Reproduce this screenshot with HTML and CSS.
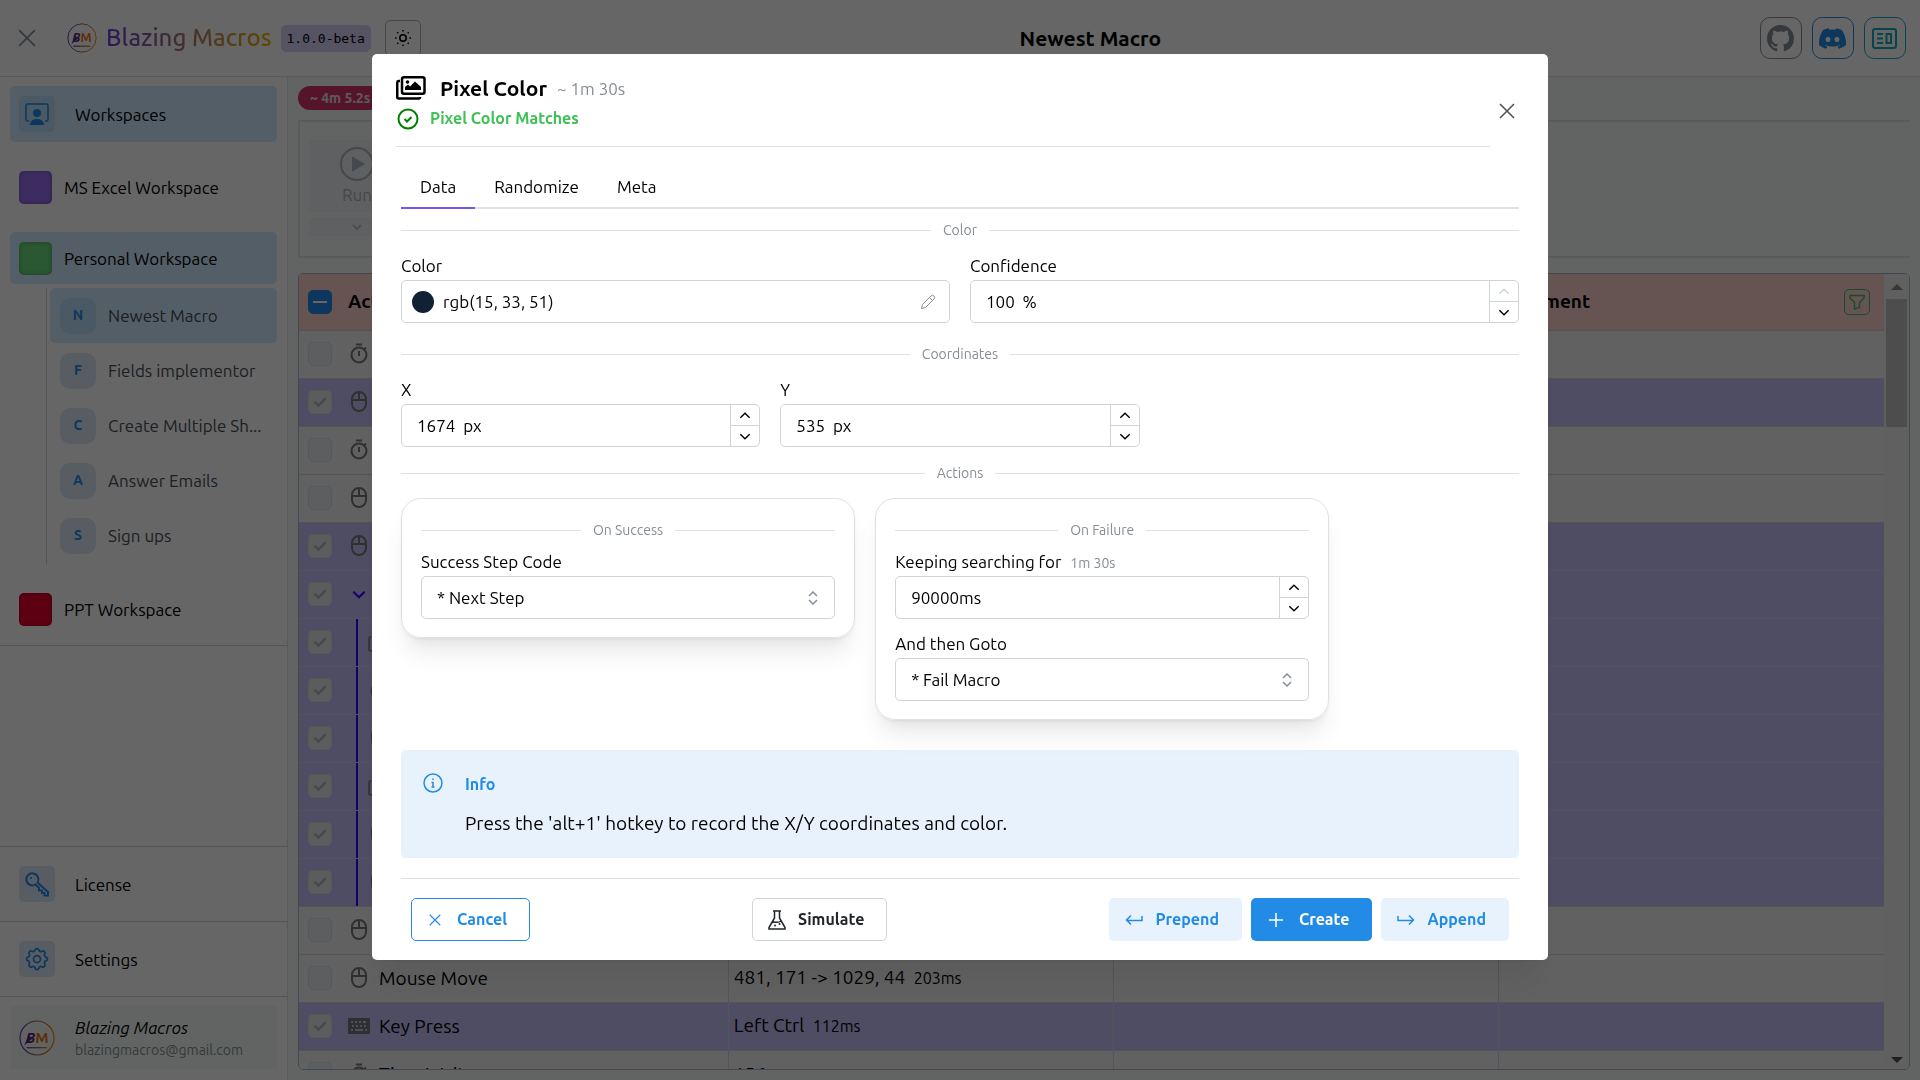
FILE: index.html
```html
<!DOCTYPE html>
<html lang="en">
<head>
    <meta charset="UTF-8" />
    <meta name="viewport" content="width=device-width, initial-scale=1.0" />
    <title>Blazing Macros</title>
    <link rel="stylesheet" href="styles.css">
</head>
<body>
<!-- shared icons -->
<svg class="sprite" width="0" height="0" aria-hidden="true">
    <linearGradient id="brand" x1="0" x2="1"><stop offset="0" stop-color="#5f3dc4" /><stop offset="1" stop-color="#f08c00" /></linearGradient>
    <symbol id="i-x" viewBox="0 0 16 16"><path d="M1 1l14 14M15 1L1 15" /></symbol>
    <symbol id="i-up" viewBox="0 0 10 6"><path d="M1 5l4-4 4 4" /></symbol>
    <symbol id="i-down" viewBox="0 0 10 6"><path d="M1 1l4 4 4-4" /></symbol>
    <symbol id="i-selector" viewBox="0 0 10 14"><path d="M1 5l4-4 4 4M1 9l4 4 4-4" /></symbol>
    <symbol id="i-timer" viewBox="0 0 20 22"><path d="M7 1.500h6M10 8v5M15.500 6l1.500-1.500" /><circle cx="10" cy="12" r="7.500" /></symbol>
    <symbol id="i-mouse" viewBox="0 0 20 22"><rect x="3" y="1" width="14" height="19" rx="7" /><path d="M3 9h14M10 1v8" /></symbol>
    <symbol id="i-keyboard" viewBox="0 0 22 16"><path fill="currentColor" stroke="none" fill-rule="evenodd" d="M1 0h20a1 1 0 0 1 1 1v14a1 1 0 0 1-1 1H1a1 1 0 0 1-1-1V1a1 1 0 0 1 1-1zM3 3v2h2V3zM7 3v2h2V3zM11 3v2h2V3zM15 3v2h3V3zM4 7v2h2V7zM8 7v2h2V7zM12 7v2h2V7zM16 7v2h2V7zM3 11v2h2v-2zM7 11v2h8v-2zM17 11v2h2v-2z" /></symbol>
    <symbol id="i-images" viewBox="0 0 30 24"><rect x="6" y="1.250" width="22.500" height="16.500" rx="2" /><path d="M4 5H2.500A1.500 1.500 0 0 0 1.250 6.500V21a1.500 1.500 0 0 0 1.500 1.500H23a1.500 1.500 0 0 0 1.200-1.500" /><path class="solid" d="M9 14v-3l3-2.500 2 2 5-5 6 5.500V14z" /><circle class="solid" cx="11.500" cy="6" r="1.800" /></symbol>
    <symbol id="i-check" viewBox="0 0 14 10"><path d="M1.500 5l4 3.500L12.500 1.500" /></symbol>
    <symbol id="i-logo" viewBox="0 0 36 36">
        <circle cx="18" cy="18" r="17" fill="none" stroke="url(#brand)" stroke-width="1.200" />
        <path d="M5 26l5-11 3 4-4 3z" fill="#5a2a86" stroke="none" />
        <text class="logo-text" x="18" y="23" text-anchor="middle"><tspan fill="#5a2a86" font-style="italic">B</tspan><tspan fill="#e8750a">M</tspan></text>
        <path d="M8 27.500h20v.500H8z" stroke="url(#brand)" stroke-width="1" stroke-dasharray="2 1" />
    </symbol>
</svg>

<div class="app">
    <header class="topbar">
        <div class="brand">
            <button class="icon-btn menu-close" aria-label="Close menu"><svg class="icon" width="18" height="18"><use href="#i-x" /></svg></button>
            <svg class="brand-logo" width="30" height="30"><use href="#i-logo" /></svg>
            <span class="brand-name">Blazing Macros</span>
            <code class="version">1.0.0-beta</code>
            <button class="theme-btn" aria-label="Toggle theme">
                <svg class="icon" width="18" height="18" viewBox="0 0 18 18"><circle cx="9" cy="9" r="3.200" /><path d="M9 1v1.500M9 15.500V17M1 9h1.500M15.500 9H17M3.300 3.300l1 1M13.700 13.700l1 1M3.300 14.700l1-1M13.700 4.300l1-1" /></svg>
            </button>
        </div>
        <h1 class="page-title">Newest Macro</h1>
        <div class="links">
            <a href="#" class="link-btn github" aria-label="GitHub">
                <svg width="27" height="27" viewBox="0 0 16 16" fill="currentColor"><path d="M8 0C3.580 0 0 3.580 0 8c0 3.540 2.290 6.530 5.470 7.590.4.070.55-.17.55-.38 0-.19-.01-.82-.01-1.490-2.010.37-2.530-.49-2.690-.94-.09-.23-.48-.94-.82-1.130-.28-.15-.68-.52-.01-.53.63-.01 1.080.58 1.230.82.72 1.210 1.870.87 2.330.66.07-.52.28-.87.51-1.070-1.780-.2-3.640-.89-3.640-3.950 0-.87.31-1.590.82-2.150-.08-.2-.36-1.020.08-2.120 0 0 .67-.21 2.200.82.64-.18 1.320-.27 2-.27.68 0 1.360.09 2 .27 1.530-1.040 2.200-.82 2.200-.82.44 1.100.16 1.920.08 2.120.51.56.82 1.270.82 2.150 0 3.070-1.870 3.750-3.650 3.950.29.25.54.73.54 1.480 0 1.070-.01 1.930-.01 2.200 0 .21.15.46.55.38A8.012 8.012 0 0 0 16 8c0-4.420-3.580-8-8-8z" /></svg>
            </a>
            <a href="#" class="link-btn discord" aria-label="Discord">
                <svg width="27" height="27" viewBox="0 0 16 16" fill="currentColor"><path d="M13.545 2.907a13.227 13.227 0 0 0-3.257-1.011.05.05 0 0 0-.052.025c-.141.25-.297.577-.406.833a12.190 12.190 0 0 0-3.658 0 8.258 8.258 0 0 0-.412-.833.051.051 0 0 0-.052-.025c-1.125.194-2.220.534-3.257 1.011a.041.041 0 0 0-.021.018C.356 6.024-.213 9.047.066 12.032c.001.014.01.028.021.037a13.276 13.276 0 0 0 3.995 2.020.05.05 0 0 0 .056-.019c.308-.42.582-.863.818-1.329a.05.05 0 0 0-.01-.059.051.051 0 0 0-.018-.011 8.875 8.875 0 0 1-1.248-.595.05.05 0 0 1-.02-.066.051.051 0 0 1 .015-.019c.084-.063.168-.129.248-.195a.05.05 0 0 1 .051-.007c2.619 1.196 5.454 1.196 8.041 0a.052.052 0 0 1 .053.007c.08.066.164.132.248.195a.051.051 0 0 1-.004.085 8.254 8.254 0 0 1-1.249.594.05.05 0 0 0-.03.03.052.052 0 0 0 .003.041c.24.465.515.909.817 1.329a.05.05 0 0 0 .056.019 13.235 13.235 0 0 0 4.001-2.020.049.049 0 0 0 .021-.037c.334-3.451-.559-6.449-2.366-9.106a.034.034 0 0 0-.02-.019Zm-8.198 7.307c-.789 0-1.438-.724-1.438-1.612 0-.889.637-1.613 1.438-1.613.807 0 1.450.73 1.438 1.613 0 .888-.637 1.612-1.438 1.612Zm5.316 0c-.788 0-1.438-.724-1.438-1.612 0-.889.637-1.613 1.438-1.613.807 0 1.451.73 1.438 1.613 0 .888-.631 1.612-1.438 1.612Z" /></svg>
            </a>
            <a href="#" class="link-btn news" aria-label="News">
                <svg class="icon" width="25" height="21" viewBox="0 0 25 21"><g stroke-width="2"><rect x="1" y="1" width="23" height="19" rx="2" /><path d="M5 6h6M5 10.500h6M5 15h6" /><rect x="14.500" y="6" width="4.500" height="9" /></g></svg>
            </a>
        </div>
    </header>

    <div class="layout">
        <nav class="sidebar">
            <div class="workspaces">
                <a href="#" class="nav-link active">
                    <span class="nav-icon"><svg class="icon" width="24" height="24" viewBox="0 0 24 24"><path d="M4 19H2.500A1.500 1.500 0 0 1 1 17.500v-14A1.500 1.500 0 0 1 2.500 2h19A1.500 1.500 0 0 1 23 3.500v14a1.500 1.500 0 0 1-1.500 1.500H20" /><circle class="solid" cx="12" cy="11" r="4" /><path class="solid" d="M5 23c0-4 3-6 7-6s7 2 7 6z" /></svg></span>
                    Workspaces
                </a>
                <a href="#" class="workspace"><span class="swatch violet"></span>MS Excel Workspace</a>
                <a href="#" class="workspace active"><span class="swatch green"></span>Personal Workspace</a>
                <div class="macros">
                    <a href="#" class="macro active"><span class="letter">N</span><span class="macro-name">Newest Macro</span></a>
                    <a href="#" class="macro"><span class="letter">F</span><span class="macro-name">Fields implementor</span></a>
                    <a href="#" class="macro"><span class="letter">C</span><span class="macro-name">Create Multiple Sh...</span></a>
                    <a href="#" class="macro"><span class="letter">A</span><span class="macro-name">Answer Emails</span></a>
                    <a href="#" class="macro"><span class="letter">S</span><span class="macro-name">Sign ups</span></a>
                </div>
                <a href="#" class="workspace"><span class="swatch red"></span>PPT Workspace</a>
            </div>
            <div class="sidebar-bottom">
                <div class="nav-section">
                    <a href="#" class="nav-link">
                        <span class="nav-icon"><svg class="icon" width="26" height="26" viewBox="0 0 26 26"><g stroke-width="2"><path d="M13.500 11.500L24 21v3.500h-3.500V22H18v-2.500h-3V17l-3.500-3.500A6 6 0 1 1 13.500 11.500z" /><circle class="solid" cx="7" cy="7" r="1" /></g></svg></span>
                        License
                    </a>
                </div>
                <div class="nav-section">
                    <a href="#" class="nav-link">
                        <span class="nav-icon"><svg class="icon" width="28" height="28" viewBox="0 0 24 24"><path d="M10.325 4.317c.426-1.756 2.924-1.756 3.350 0a1.724 1.724 0 0 0 2.573 1.066c1.543-.94 3.310.826 2.370 2.370a1.724 1.724 0 0 0 1.065 2.572c1.756.426 1.756 2.924 0 3.350a1.724 1.724 0 0 0-1.066 2.573c.94 1.543-.826 3.310-2.370 2.370a1.724 1.724 0 0 0-2.572 1.065c-.426 1.756-2.924 1.756-3.350 0a1.724 1.724 0 0 0-2.573-1.066c-1.543.94-3.310-.826-2.370-2.370a1.724 1.724 0 0 0-1.065-2.572c-1.756-.426-1.756-2.924 0-3.350a1.724 1.724 0 0 0 1.066-2.573c-.94-1.543.826-3.310 2.370-2.370 1 .608 2.296.07 2.572-1.065z" /><circle cx="12" cy="12" r="3" /></svg></span>
                        Settings
                    </a>
                </div>
                <div class="nav-section user-section">
                    <a href="#" class="user">
                        <svg width="36" height="36"><use href="#i-logo" /></svg>
                        <span class="user-text">
                            <em>Blazing Macros</em>
                            <small>blazingmacros@gmail.com</small>
                        </span>
                    </a>
                </div>
            </div>
        </nav>

        <main class="content">
            <span class="duration">~ 4m 5.2s</span>
            <div class="toolbar">
                <div class="run">
                    <button class="run-btn">
                        <svg width="36" height="36" viewBox="0 0 36 36" fill="none" stroke="currentColor" stroke-width="2"><circle cx="18" cy="18" r="16" /><path d="M14 12l10 6-10 6z" fill="currentColor" /></svg>
                        Run
                    </button>
                    <button class="run-more" aria-label="Run options"><svg class="icon" width="10" height="6"><use href="#i-down" /></svg></button>
                </div>
            </div>
            <div class="steps">
                <div class="steps-scroll">
                    <table class="steps-table">
                        <colgroup><col class="col-check"><col><col><col><col></colgroup>
                        <thead>
                            <tr>
                                <th><label class="box some"><input type="checkbox" aria-label="Select all"></label></th>
                                <th>Action</th>
                                <th></th>
                                <th></th>
                                <th>
                                    <div class="th-inner">Comment
                                        <button class="filter-btn" aria-label="Filter"><svg class="icon" width="16" height="16" viewBox="0 0 16 16"><path d="M1 1.500h14V4l-4.500 4.500v5l-5 1.500V8.500L1 4z" /></svg></button>
                                    </div>
                                </th>
                            </tr>
                        </thead>
                        <tbody id="steps-body"></tbody>
                    </table>
                </div>
                <div class="scrollbar" aria-hidden="true"><span class="arrow-up"></span><span class="thumb"></span><span class="arrow-down"></span></div>
            </div>
        </main>
    </div>
</div>

<div class="overlay">
    <div class="modal" role="dialog" aria-modal="true" aria-labelledby="modal-title">
        <div class="modal-header">
            <div class="modal-heading">
                <div class="title-row">
                    <svg class="icon title-icon" width="30" height="24"><use href="#i-images" /></svg>
                    <h2 id="modal-title">Pixel Color</h2>
                    <span class="estimate">~ 1m 30s</span>
                </div>
                <div class="status-row">
                    <svg width="22" height="22" viewBox="0 0 22 22" fill="none" stroke="#008000" stroke-width="2"><circle cx="11" cy="11" r="9.500" /><path d="M7.500 11l2.500 2.500 4.500-4.500" /></svg>
                    <span>Pixel Color Matches</span>
                </div>
            </div>
            <button class="icon-btn modal-close" aria-label="Close"><svg class="icon" width="16" height="16"><use href="#i-x" /></svg></button>
        </div>

        <form class="modal-body">
            <div class="tabs" role="tablist">
                <button type="button" class="tab active" role="tab" aria-selected="true">Data</button>
                <button type="button" class="tab" role="tab">Randomize</button>
                <button type="button" class="tab" role="tab">Meta</button>
            </div>

            <div class="divider">Color</div>
            <div class="row two">
                <div class="field">
                    <label for="color">Color</label>
                    <div class="control">
                        <span class="color-dot"></span>
                        <input id="color" class="color-input" type="text" value="rgb(15, 33, 51)">
                        <svg class="icon edit" width="16" height="16" viewBox="0 0 16 16"><path d="M1.500 14.500l1-4L11 2a2 2 0 0 1 3 3l-8.500 8.500zM9.500 3.500l3 3" /></svg>
                    </div>
                </div>
                <div class="field">
                    <label for="confidence">Confidence</label>
                    <div class="control">
                        <input id="confidence" type="text" value="100  %">
                        <div class="stepper">
                            <button type="button" disabled aria-label="Increase"><svg class="icon" width="12" height="7"><use href="#i-up" /></svg></button>
                            <button type="button" aria-label="Decrease"><svg class="icon" width="12" height="7"><use href="#i-down" /></svg></button>
                        </div>
                    </div>
                </div>
            </div>

            <div class="divider">Coordinates</div>
            <div class="row three">
                <div class="field">
                    <label for="pos-x">X</label>
                    <div class="control">
                        <input id="pos-x" type="text" value="1674  px">
                        <div class="stepper">
                            <button type="button" aria-label="Increase"><svg class="icon" width="12" height="7"><use href="#i-up" /></svg></button>
                            <button type="button" aria-label="Decrease"><svg class="icon" width="12" height="7"><use href="#i-down" /></svg></button>
                        </div>
                    </div>
                </div>
                <div class="field">
                    <label for="pos-y">Y</label>
                    <div class="control">
                        <input id="pos-y" type="text" value="535  px">
                        <div class="stepper">
                            <button type="button" aria-label="Increase"><svg class="icon" width="12" height="7"><use href="#i-up" /></svg></button>
                            <button type="button" aria-label="Decrease"><svg class="icon" width="12" height="7"><use href="#i-down" /></svg></button>
                        </div>
                    </div>
                </div>
            </div>

            <div class="divider actions-divider">Actions</div>
            <div class="cards">
                <section class="card success">
                    <div class="divider">On Success</div>
                    <div class="field">
                        <label for="on-success">Success Step Code</label>
                        <div class="control">
                            <select id="on-success"><option>* Next Step</option></select>
                            <svg class="icon selector" width="10" height="14"><use href="#i-selector" /></svg>
                        </div>
                    </div>
                </section>
                <section class="card failure">
                    <div class="divider">On Failure</div>
                    <div class="field">
                        <label for="search-for">Keeping searching for <small>1m 30s</small></label>
                        <div class="control">
                            <input id="search-for" type="text" value="90000ms">
                            <div class="stepper">
                                <button type="button" aria-label="Increase"><svg class="icon" width="12" height="7"><use href="#i-up" /></svg></button>
                                <button type="button" aria-label="Decrease"><svg class="icon" width="12" height="7"><use href="#i-down" /></svg></button>
                            </div>
                        </div>
                    </div>
                    <div class="field">
                        <label for="on-failure">And then Goto</label>
                        <div class="control">
                            <select id="on-failure"><option>* Fail Macro</option></select>
                            <svg class="icon selector" width="10" height="14"><use href="#i-selector" /></svg>
                        </div>
                    </div>
                </section>
            </div>

            <div class="alert">
                <svg class="icon" width="20" height="20" viewBox="0 0 20 20"><circle cx="10" cy="10" r="9" /><path d="M10 5.500v1.500M8.500 9.500H10V14M8.500 14h3" /></svg>
                <div>
                    <strong>Info</strong>
                    <p>Press the 'alt+1' hotkey to record the X/Y coordinates and color.</p>
                </div>
            </div>

            <div class="footer">
                <button type="button" class="btn outline"><svg class="icon" width="12" height="12"><use href="#i-x" /></svg>Cancel</button>
                <button type="button" class="btn default"><svg class="icon" width="18" height="20" viewBox="0 0 18 20"><path d="M5 1h8M6.500 1v7L1 17.500V19h16v-1.500L11.500 8V1M4 12.500c3-1.500 5 1.500 9-1.500" /><circle class="solid" cx="7" cy="15.500" r="1" /><circle class="solid" cx="11.500" cy="14" r="1" /></svg>Simulate</button>
                <div class="btn-group">
                    <button type="button" class="btn light"><svg class="icon" width="18" height="12" viewBox="0 0 18 12"><path d="M6 1.500L1.500 6 6 10.500M1.500 6.500H17V2" /></svg>Prepend</button>
                    <button type="submit" class="btn filled"><svg class="icon" width="14" height="14" viewBox="0 0 14 14"><path d="M7 0v14M0 7h14" /></svg>Create</button>
                    <button type="button" class="btn light"><svg class="icon" width="18" height="12" viewBox="0 0 18 12"><path d="M12 1.500L16.500 6 12 10.500M16.500 6.500H1V2" /></svg>Append</button>
                </div>
            </div>
        </form>
    </div>
</div>

<script src="script.js"></script>
</body>
</html>
```

FILE: styles.css
```css
* {
  box-sizing: border-box;
}

body {
  margin: 0;
  font-family: Ubuntu, "Noto Sans", sans-serif;
  font-size: 17px;
  line-height: 25px;
  color: #000;
  overflow: hidden;
}

button,
input,
select {
  font: inherit;
  color: inherit;
  margin: 0;
}

button {
  cursor: pointer;
}

a {
  color: inherit;
  text-decoration: none;
}

.sprite {
  position: absolute;
}

.icon {
  fill: none;
  stroke: currentColor;
  stroke-width: 1.5;
  flex-shrink: 0;
}

.solid {
  fill: currentColor;
  stroke: none;
}

.icon-btn {
  display: flex;
  align-items: center;
  justify-content: center;
  padding: 0;
  border: 0;
  background: none;
}

.logo-text {
  font-size: 15px;
  font-weight: bold;
}

.app {
  display: flex;
  flex-direction: column;
  height: 100vh;
}

/* Top bar */
.topbar {
  display: flex;
  align-items: center;
  justify-content: space-between;
  height: 77px;
  padding: 0 14px 0 18px;
  border-bottom: 1px solid #dee2e6;
}

.brand {
  display: flex;
  align-items: center;
}

.menu-close {
  color: #868e96;
}

.brand-logo {
  margin: 0 9px 0 31px;
}

.brand-name {
  font-size: 24px;
  font-weight: 500;
  line-height: 36px;
  background: linear-gradient(90deg, #6741d9, #f5b301);
  background-clip: text;
  color: transparent;
}

.version {
  margin: 0 14px 0 9px;
  padding: 1px 6px;
  border-radius: 5px;
  background: #d8d0f5;
  color: #000;
  font-family: "DejaVu Sans Mono", monospace;
  font-size: 13px;
}

.theme-btn {
  display: flex;
  align-items: center;
  justify-content: center;
  width: 36px;
  height: 36px;
  padding: 0;
  border: 1px solid #adb5bd;
  border-radius: 5px;
  background: none;
  color: #000;
}

.page-title {
  margin: 0;
  font-size: 21px;
  font-weight: 600;
}

.links {
  display: flex;
  gap: 10px;
}

.link-btn {
  display: flex;
  align-items: center;
  justify-content: center;
  width: 42px;
  height: 42px;
  border: 1px solid currentColor;
  border-radius: 10px;
}

.github {
  color: #868e96;
}

.discord {
  color: #228be6;
}

.news {
  color: #15aabf;
}

/* Sidebar */
.layout {
  display: flex;
  flex: 1;
  min-height: 0;
}

.sidebar {
  display: flex;
  flex-direction: column;
  justify-content: space-between;
  width: 288px;
  border-right: 1px solid #dee2e6;
}

.workspaces {
  padding: 9px 10px 10px;
  border-bottom: 1px solid #ced4da;
}

.nav-link {
  display: flex;
  align-items: center;
  gap: 20px;
  height: 56px;
  padding: 0 9px;
  border-radius: 5px;
}

.nav-icon {
  display: flex;
  align-items: center;
  justify-content: center;
  width: 36px;
  height: 36px;
  border-radius: 5px;
  background: #dbe7f8;
  color: #228be6;
}

.active .nav-icon {
  background: #bcdffa;
}

.nav-link.active,
.workspace.active,
.macro.active {
  background: #d0ebff;
}

.workspace {
  display: flex;
  align-items: center;
  gap: 12px;
  height: 52px;
  margin-top: 19px;
  padding: 0 9px;
  border-radius: 5px;
}

.swatch {
  width: 33px;
  height: 33px;
  border-radius: 5px;
  box-shadow: inset 0 0 4px rgba(0, 0, 0, 0.3);
}

.violet {
  background: #9a6ff0;
}

.green {
  background: #69db7c;
}

.red {
  background: #e8002f;
}

.macros {
  margin: 4px 0 0 36px;
  padding: 0 0 1px 3px;
  border-left: 1px solid #ced4da;
}

.macro {
  display: flex;
  align-items: center;
  gap: 12px;
  height: 55px;
  padding: 0 9px 0 10px;
  border-radius: 5px;
  color: #495057;
}

.letter {
  display: flex;
  align-items: center;
  justify-content: center;
  flex-shrink: 0;
  width: 36px;
  height: 36px;
  border-radius: 10px;
  background: #dbe7f8;
  color: #228be6;
  font-size: 14px;
  font-weight: 700;
}

.macro.active .letter {
  background: #bcdffa;
}

.macro-name {
  white-space: nowrap;
}

.nav-section {
  padding: 9px 10px;
  border-top: 1px solid #ced4da;
}

.user-section {
  padding-bottom: 11px;
}

.user {
  display: flex;
  align-items: center;
  gap: 20px;
  height: 63px;
  padding: 0 9px;
  background: #f4fbf7;
}

.user-text {
  display: flex;
  flex-direction: column;
}

.user-text small {
  font-size: 14px;
  line-height: 20px;
  color: #868e96;
}

/* Main area */
.content {
  display: flex;
  flex-direction: column;
  align-items: flex-start;
  flex: 1;
  min-width: 0;
  padding: 9px 10px 10px;
  background: #f4fbf7;
}

.duration {
  padding: 0 12px;
  border-radius: 12px;
  background: #d6336c;
  color: #dee2e6;
  font-size: 14px;
  font-weight: 700;
  line-height: 24px;
}

.toolbar {
  align-self: stretch;
  height: 138px;
  margin: 10px 0 15px;
  padding: 18px 9px;
  border: 2px solid #dee2e6;
  border-right: 0;
}

.run {
  display: flex;
  flex-direction: column;
  gap: 5px;
  width: 96px;
}

.run-btn,
.run-more {
  display: flex;
  flex-direction: column;
  align-items: center;
  justify-content: center;
  height: 72px;
  padding: 0;
  border: 0;
  border-radius: 5px;
  background: #eceff3;
  color: #adb5bd;
}

.run-more {
  height: 19px;
}

.steps {
  display: flex;
  flex: 1;
  align-self: stretch;
  min-height: 0;
  overflow: hidden;
  border: 1px solid #a5b4cb;
  border-radius: 5px;
}

.steps-scroll {
  flex: 1;
  min-width: 0;
  overflow: hidden;
}

.steps-table {
  width: 100%;
  table-layout: fixed;
  border-collapse: collapse;
  background: #f3f3f3;
  font-size: 19px;
}

.col-check {
  width: 44px;
}

.steps-table th,
.steps-table td {
  height: 48px;
  padding: 0 5px;
  border-bottom: 1px solid #cfcfdc;
  text-align: left;
  white-space: nowrap;
}

.steps-table td + td + td {
  border-left: 1px solid #d5d5d9;
}

.steps-table th {
  height: 56px;
  background: #fed3cf;
}

.steps-table th:first-child,
.steps-table td:first-child {
  padding-left: 9px;
}

.steps-table .selected td {
  background: #c5c0fb;
}

.steps-table small {
  margin-left: 4px;
  font-size: 16px;
}

.th-inner {
  display: flex;
  align-items: center;
  justify-content: space-between;
  padding-right: 9px;
}

.filter-btn {
  display: flex;
  align-items: center;
  justify-content: center;
  width: 26px;
  height: 26px;
  padding: 0;
  border: 1px solid #40c057;
  border-radius: 5px;
  background: none;
  color: #40c057;
}

.box {
  display: flex;
  align-items: center;
  justify-content: center;
  width: 24px;
  height: 24px;
  border: 1px solid #d8dde3;
  border-radius: 5px;
  background: #e9ecef;
  color: #adb5bd;
}

.box input {
  position: absolute;
  opacity: 0;
}

.box .icon {
  stroke-width: 2.5;
}

.selected .box {
  border-color: #dcdcdc;
  background: #e6e6e6;
}

.box.some {
  border-color: #228be6;
  background: #228be6;
}

.box.some::after {
  content: "";
  width: 14px;
  height: 2px;
  background: #fff;
}

.step-name {
  display: flex;
  align-items: center;
  gap: 9px;
  height: 47px;
}

.step-name .icon {
  color: #777;
  stroke-width: 2;
}

.step-name .toggle {
  margin-left: 4px;
  color: #3a00ff;
  stroke-width: 1.5;
}

.nested {
  margin-left: 8px;
  padding-left: 10px;
  border-left: 2px solid #3a00ff;
}

.scrollbar {
  display: flex;
  flex-direction: column;
  align-items: center;
  width: 25px;
  padding: 10px 2px 6px;
  background: #f1f1f1;
}

.arrow-up {
  border: 6px solid transparent;
  border-top: 0;
  border-bottom-color: #888;
}

.arrow-down {
  margin-top: auto;
  border: 6px solid transparent;
  border-bottom: 0;
  border-top-color: #505050;
}

.thumb {
  width: 21px;
  height: 128px;
  margin-top: 9px;
  background: #c1c1c1;
}

/* Modal */
.overlay {
  position: fixed;
  inset: 0;
  padding: 5vh 20px;
  background: rgba(0, 0, 0, 0.6);
}

.modal {
  max-width: 1176px;
  margin: 0 auto;
  border-radius: 5px;
  background: #fff;
  box-shadow: 0 1px 3px rgba(0, 0, 0, 0.05), 0 36px 28px -7px rgba(0, 0, 0, 0.05), 0 17px 17px -7px rgba(0, 0, 0, 0.04);
}

.modal-header {
  display: flex;
  align-items: stretch;
  padding: 20px 24px 0;
}

.modal-heading {
  flex: 1;
  padding-bottom: 14px;
  border-bottom: 1px solid #dee2e6;
}

.title-row,
.status-row {
  display: flex;
  align-items: center;
}

.title-row {
  height: 28px;
  margin-bottom: 3px;
}

.title-icon {
  margin-right: 14px;
  stroke-width: 2.5;
}

.title-row h2 {
  margin: 0;
  font-size: 21px;
  font-weight: 600;
}

.estimate {
  margin-left: 10px;
  color: #868e96;
}

.status-row {
  gap: 11px;
  height: 27px;
  padding-left: 1px;
  color: #40c057;
  font-size: 16px;
  font-weight: 700;
}

.modal-close {
  width: 34px;
  color: #495057;
}

.modal-body {
  padding: 18px 29px 19px;
}

.tabs {
  display: flex;
  border-bottom: 2px solid #dee2e6;
}

.tab {
  height: 44px;
  margin-bottom: -2px;
  padding: 0 19px;
  border: 0;
  border-bottom: 2px solid transparent;
  background: none;
}

.tab.active {
  border-bottom-color: #7950f2;
}

.divider {
  display: flex;
  align-items: center;
  gap: 12px;
  margin: 20px 0 12px;
  color: #868e96;
  font-size: 14px;
  line-height: 22px;
}

.divider::before,
.divider::after {
  content: "";
  flex: 1;
  height: 1px;
  background: #dee2e6;
}

.tabs + .divider {
  margin-top: 10px;
}

.actions-divider {
  margin: 15px 0 14px;
}

.row {
  display: grid;
  gap: 20px;
}

.two {
  grid-template-columns: repeat(2, 1fr);
}

.three {
  grid-template-columns: repeat(3, 1fr);
}

.field label {
  display: block;
  margin-bottom: 2px;
}

.field label small {
  margin-left: 5px;
  color: #868e96;
  font-size: 14px;
  line-height: 14px;
}

.control {
  display: flex;
  align-items: center;
  height: 43px;
  border: 1px solid #ced4da;
  border-radius: 5px;
  overflow: hidden;
}

.control input,
.control select {
  flex: 1;
  min-width: 0;
  height: 100%;
  padding: 0 15px;
  border: 0;
  outline: 0;
  background: none;
  appearance: none;
}

.control .color-input {
  padding: 0 9px;
}

.color-dot {
  width: 22px;
  height: 22px;
  margin-left: 10px;
  border-radius: 50%;
  background: #0f2133;
}

.edit {
  margin-right: 13px;
  color: #868e96;
  stroke-width: 1;
}

.selector {
  margin: 0 16px 0 -26px;
  color: #868e96;
  pointer-events: none;
}

.stepper {
  display: flex;
  flex-direction: column;
  width: 29px;
  height: 100%;
  border-left: 1px solid #ced4da;
}

.stepper .icon {
  stroke-width: 1.2;
}

.stepper button {
  display: flex;
  align-items: center;
  justify-content: center;
  flex: 1;
  padding: 0;
  border: 0;
  background: none;
}

.stepper button + button {
  border-top: 1px solid #ced4da;
}

.stepper button:disabled {
  color: #ced4da;
}

.cards {
  display: grid;
  grid-template-columns: repeat(12, 1fr);
  align-items: start;
  gap: 20px;
}

.card {
  grid-column: span 5;
  padding: 20px 19px 18px;
  border: 1px solid #dee2e6;
  border-radius: 20px;
  box-shadow: 0 1px 3px rgba(0, 0, 0, 0.05), 0 20px 25px -5px rgba(0, 0, 0, 0.08), 0 10px 10px -5px rgba(0, 0, 0, 0.04);
}

.card .divider {
  margin: 0 0 8px;
}

.field + .field {
  margin-top: 12px;
}

.row .field {
  margin-top: 0;
}

.alert {
  display: flex;
  gap: 22px;
  margin-top: 30px;
  padding: 21px 20px 21px 22px;
  border-radius: 5px;
  background: #e7f2fc;
}

.alert .icon {
  margin-top: 2px;
  color: #228be6;
}

.alert strong {
  color: #228be6;
  font-size: 16px;
}

.alert p {
  margin: 12px 0 0;
  font-size: 19px;
  line-height: 28px;
}

.footer {
  display: flex;
  align-items: center;
  justify-content: space-between;
  margin-top: 20px;
  padding: 19px 10px 0;
  border-top: 1px solid #dee2e6;
}

.btn-group {
  display: flex;
  gap: 9px;
}

.btn {
  display: flex;
  align-items: center;
  gap: 16px;
  height: 43px;
  padding: 0 22px 0 17px;
  border: 1px solid transparent;
  border-radius: 5px;
  background: none;
  font-size: 16px;
  font-weight: 700;
}

.outline {
  border-color: #228be6;
  color: #228be6;
}

.default {
  gap: 12px;
  padding-left: 15px;
  border-color: #ced4da;
  color: #212529;
}

.light {
  gap: 12px;
  padding-left: 15px;
  background: #e7f2fc;
  color: #228be6;
}

.filled {
  background: #228be6;
  color: #fff;
}
```

FILE: script.js
```js
const steps = [
  { icon: "timer", name: "Time Wait" },
  { icon: "mouse", name: "Mouse Click", selected: true },
  { icon: "timer", name: "Time Wait" },
  { icon: "mouse", name: "Mouse Move" },
  { icon: "mouse", name: "Mouse Click", selected: true },
  { icon: "down", name: "Group", selected: true },
  { icon: "images", name: "Pixel Color", selected: true, nested: true },
  { icon: "timer", name: "Time Wait", selected: true, nested: true },
  { icon: "mouse", name: "Mouse Click", selected: true, nested: true },
  { icon: "images", name: "Pixel Color", selected: true, nested: true },
  { icon: "mouse", name: "Mouse Move", selected: true, nested: true },
  { icon: "mouse", name: "Mouse Click", selected: true, nested: true },
  { icon: "mouse", name: "Mouse Move" },
  { icon: "mouse", name: "Mouse Move", value: "481, 171 -> 1029, 44", time: "203ms" },
  { icon: "keyboard", name: "Key Press", selected: true, value: "Left Ctrl", time: "112ms" },
  { icon: "timer", name: "Time Wait", value: "156ms" },
];

const sizes = { timer: [22, 22], mouse: [22, 22], keyboard: [22, 16], images: [24, 19], down: [14, 9] };

document.getElementById("steps-body").innerHTML = steps.map((s) => {
  const [w, h] = sizes[s.icon];
  const check = s.selected ? '<svg class="icon" width="14" height="10"><use href="#i-check" /></svg>' : "";
  return `<tr class="${s.selected ? "selected" : ""}">
    <td><label class="box"><input type="checkbox" aria-label="${s.name}" ${s.selected ? "checked" : ""}>${check}</label></td>
    <td><div class="step-name ${s.nested ? "nested" : ""}"><svg class="icon ${s.icon === "down" ? "toggle" : ""}" width="${w}" height="${h}"><use href="#i-${s.icon}" /></svg>${s.name}</div></td>
    <td>${s.value || ""} ${s.time ? `<small>${s.time}</small>` : ""}</td>
    <td></td>
    <td></td>
  </tr>`;
}).join("");
```
